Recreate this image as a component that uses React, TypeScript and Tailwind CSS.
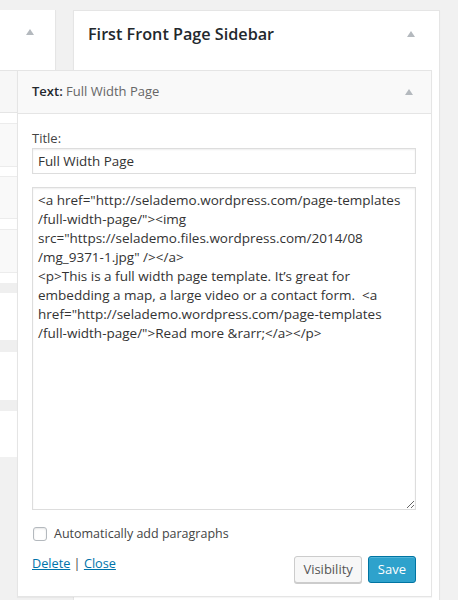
import { useState } from "react";

const widgetCode = [
  '<a href="http://selademo.wordpress.com/page-templates',
  '/full-width-page/"><img',
  'src="https://selademo.files.wordpress.com/2014/08',
  '/mg_9371-1.jpg" /></a>',
  "<p>This is a full width page template. It\u2019s great for",
  "embedding a map, a large video or a contact form.  <a",
  'href="http://selademo.wordpress.com/page-templates',
  '/full-width-page/">Read more &rarr;</a></p>',
].join("\n");

function Arrow() {
  return (
    <svg width="8" height="6" viewBox="0 0 8 6" className="shrink-0">
      <polygon points="4,0 8,6 0,6" fill="#b4b9be" />
    </svg>
  );
}

// rows of the sidebar that sits behind the open widget
const leftRows = [
  { h: "h-[43px]", cls: "bg-[#f7f7f7] border-y border-[#e5e5e5]" },
  { h: "h-[10px]", cls: "bg-white" },
  { h: "h-[44px]", cls: "bg-[#f9f9f9] border-y border-[#ececec]" },
  { h: "h-[9px]", cls: "bg-white" },
  { h: "h-[43px]", cls: "bg-[#f9f9f9] border-y border-[#ececec]" },
  { h: "h-[10px]", cls: "bg-white" },
  { h: "h-[44px]", cls: "bg-[#f9f9f9] border-y border-[#ececec]" },
  { h: "h-[10px]", cls: "bg-white" },
  { h: "h-[10px]", cls: "bg-[#efefef]" },
  { h: "h-[47px]", cls: "bg-white" },
  { h: "h-[12px]", cls: "bg-[#efefef]" },
  { h: "h-[48px]", cls: "bg-white" },
  { h: "h-[11px]", cls: "bg-[#efefef]" },
  { h: "h-[46px]", cls: "bg-white" },
];

export default function App() {
  const [title, setTitle] = useState("Full Width Page");
  const [code, setCode] = useState(widgetCode);
  const [autoP, setAutoP] = useState(false);

  return (
    <div className="w-[458px] h-[600px] overflow-hidden bg-[#f1f1f1] pt-[10px] flex items-start font-['Open_Sans','Liberation_Sans',sans-serif] text-[#444]">
      {/* Left sidebar (mostly hidden) */}
      <div className="w-[56px] shrink-0 flex flex-col">
        <div className="h-[60px] bg-white border-r border-[#e5e5e5] shadow-[0_1px_1px_rgba(0,0,0,0.04)] pt-[19px] pl-[26px]">
          <Arrow />
        </div>
        <div className="flex flex-col border-r border-[#e5e5e5]">
          {leftRows.map((r, i) => (
            <div key={i} className={`${r.h} ${r.cls}`} />
          ))}
        </div>
      </div>

      {/* First Front Page Sidebar */}
      <div className="w-[367px] ml-[17px] shrink-0 h-[600px] bg-white border border-[#e5e5e5] shadow-[0_1px_1px_rgba(0,0,0,0.04)]">
        <div className="h-[59px] flex items-start justify-between pl-[14px] pr-[24px]">
          <h2 className="pt-[11px] text-[16.2px] leading-[24px] font-semibold text-[#23282d]">
            First Front Page Sidebar
          </h2>
          <div className="pt-[20px]">
            <Arrow />
          </div>
        </div>

        {/* Open Text widget */}
        <div className="relative z-10 w-[415px] ml-[-57px] bg-white border border-[#e5e5e5] shadow-[0_1px_1px_rgba(0,0,0,0.04)]">
          <div className="h-[43px] flex items-center justify-between bg-[#f9f9f9] border-b border-[#e5e5e5] pl-[14px] pr-[18px]">
            <h3 className="text-[13px] text-[#23282d]">
              <span className="font-semibold">Text:</span>{" "}
              <span className="text-[#666]">Full Width Page</span>
            </h3>
            <Arrow />
          </div>

          <div className="pl-[14px] pr-[15px] pt-[15px] pb-[13px]">
            <label className="block text-[13px] leading-[18px] mb-px">Title:</label>
            <input
              type="text"
              value={title}
              onChange={(e) => setTitle(e.target.value)}
              className="w-full h-[26px] px-[5px] border border-[#ddd] shadow-[inset_0_1px_2px_rgba(0,0,0,0.07)] text-[13.4px] text-[#333] outline-none"
            />
            <textarea
              value={code}
              onChange={(e) => setCode(e.target.value)}
              wrap="off"
              className="mt-[13px] block w-full h-[323px] overflow-hidden px-[5px] py-[3px] border border-[#ddd] shadow-[inset_0_1px_2px_rgba(0,0,0,0.07)] text-[13.5px] leading-[19px] text-[#333] outline-none"
            />

            <label className="mt-[15px] h-[18px] flex items-center gap-[7px] text-[12.5px]">
              <input
                type="checkbox"
                checked={autoP}
                onChange={(e) => setAutoP(e.target.checked)}
                className="appearance-none ml-px w-[14px] h-[14px] rounded-[3px] border border-[#b4b9be] bg-white shadow-[inset_0_1px_2px_rgba(0,0,0,0.1)] checked:bg-[#1e8cbe]"
              />
              Automatically add paragraphs
            </label>

            <div className="mt-[11px] flex items-start justify-between">
              <div className="text-[12.7px] leading-[18px] text-[#444]">
                <a href="#delete" className="text-[#0073aa] underline">
                  Delete
                </a>{" "}
                |{" "}
                <a href="#close" className="text-[#0073aa] underline">
                  Close
                </a>
              </div>
              <div className="mt-[2px] flex gap-[6px]">
                <button
                  type="button"
                  className="h-[27px] px-[8px] rounded-[3px] border border-[#ccc] bg-[#f7f7f7] shadow-[0_1px_0_#ccc] text-[13px] text-[#555]"
                >
                  Visibility
                </button>
                <button
                  type="button"
                  className="h-[27px] px-[9px] rounded-[3px] border border-[#0074a2] bg-[#2ea2cc] shadow-[inset_0_1px_0_rgba(120,200,230,0.5)] text-[13px] text-white"
                >
                  Save
                </button>
              </div>
            </div>
          </div>
        </div>
      </div>
    </div>
  );
}
